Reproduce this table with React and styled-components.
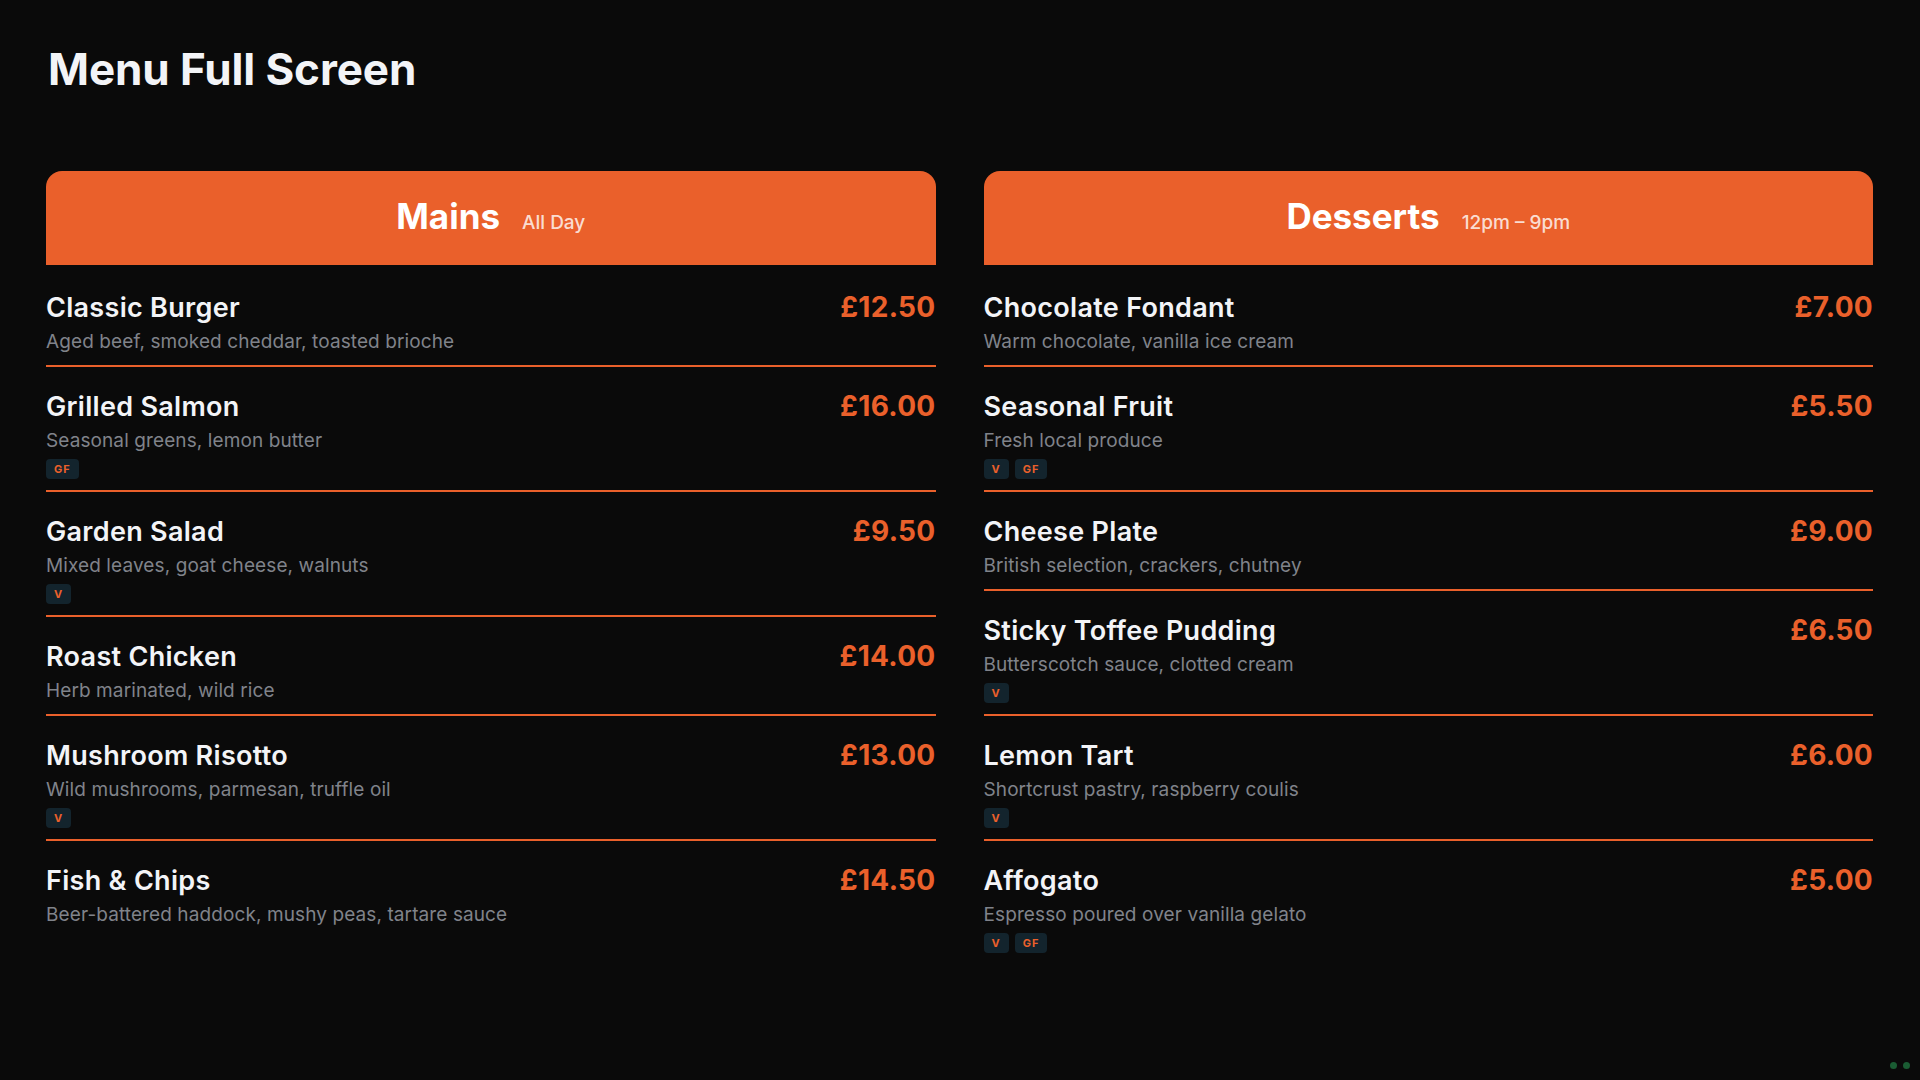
import React from "react";
import styled, { createGlobalStyle } from "styled-components";

const GlobalStyle = createGlobalStyle`
  html, body {
    margin: 0;
    padding: 0;
    background: #0a0a0a;
  }
  body {
    font-family: Inter, "Noto Sans", "Liberation Sans", sans-serif;
    color: #f3f4f6;
  }
  * { box-sizing: border-box; }
`;

const Page = styled.div`
  min-height: 1080px;
  padding: 43px 47px 40px 46px;
  background: #0a0a0a;
`;

const Title = styled.h1`
  margin: 0 0 75px 2px;
  font-size: 44px;
  line-height: 1.2;
  font-weight: 700;
  letter-spacing: -0.1px;
  color: #f3f4f7;
`;

const Columns = styled.div`
  display: grid;
  grid-template-columns: 1fr 1fr;
  gap: 48px;
`;

const Section = styled.section`
  display: flex;
  flex-direction: column;
`;

const SectionHeader = styled.header`
  height: 94px;
  background: #ea602b;
  border-radius: 16px 16px 0 0;
  display: flex;
  align-items: baseline;
  justify-content: center;
  gap: 22px;
  padding-top: 24px;
`;

const SectionName = styled.h2`
  margin: 0;
  font-size: 35px;
  line-height: 1.2;
  font-weight: 700;
  color: #ffffff;
`;

const SectionHours = styled.span`
  font-size: 19px;
  font-weight: 500;
  color: rgba(255, 255, 255, 0.8);
`;

const List = styled.div`
  display: flex;
  flex-direction: column;
  margin-top: 3px;
`;

const Item = styled.div`
  padding: 24px 0 11px;
  border-bottom: ${(p) => (p.$last ? "none" : "2px solid #ea602b")};
`;

const ItemTop = styled.div`
  display: flex;
  align-items: baseline;
  justify-content: space-between;
  gap: 24px;
`;

const ItemName = styled.div`
  font-size: 27px;
  line-height: 30px;
  font-weight: 600;
  letter-spacing: 0.3px;
  color: #f3f4f7;
`;

const Price = styled.div`
  font-size: 28px;
  line-height: 30px;
  font-weight: 700;
  letter-spacing: 0.3px;
  color: #ea602b;
`;

const Desc = styled.div`
  margin-top: 6px;
  font-size: 19px;
  line-height: 25px;
  letter-spacing: 0.1px;
  color: #80838a;
`;

const Tags = styled.div`
  display: flex;
  gap: 6px;
  margin-top: 6px;
`;

const Tag = styled.span`
  height: 20px;
  padding: 0 8px;
  display: inline-flex;
  align-items: center;
  border-radius: 4px;
  background: #13242d;
  color: #ea602b;
  font-size: 11px;
  font-weight: 700;
  letter-spacing: 1px;
`;

const Dots = styled.div`
  position: fixed;
  right: 10px;
  bottom: 11px;
  display: flex;
  gap: 6px;
`;

const Dot = styled.span`
  width: 7px;
  height: 7px;
  border-radius: 50%;
  background: #1a5c33;
`;

const sections = [
  {
    name: "Mains",
    hours: "All Day",
    items: [
      { name: "Classic Burger", desc: "Aged beef, smoked cheddar, toasted brioche", price: "£12.50", tags: [] },
      { name: "Grilled Salmon", desc: "Seasonal greens, lemon butter", price: "£16.00", tags: ["GF"] },
      { name: "Garden Salad", desc: "Mixed leaves, goat cheese, walnuts", price: "£9.50", tags: ["V"] },
      { name: "Roast Chicken", desc: "Herb marinated, wild rice", price: "£14.00", tags: [] },
      { name: "Mushroom Risotto", desc: "Wild mushrooms, parmesan, truffle oil", price: "£13.00", tags: ["V"] },
      { name: "Fish & Chips", desc: "Beer-battered haddock, mushy peas, tartare sauce", price: "£14.50", tags: [] },
    ],
  },
  {
    name: "Desserts",
    hours: "12pm – 9pm",
    items: [
      { name: "Chocolate Fondant", desc: "Warm chocolate, vanilla ice cream", price: "£7.00", tags: [] },
      { name: "Seasonal Fruit", desc: "Fresh local produce", price: "£5.50", tags: ["V", "GF"] },
      { name: "Cheese Plate", desc: "British selection, crackers, chutney", price: "£9.00", tags: [] },
      { name: "Sticky Toffee Pudding", desc: "Butterscotch sauce, clotted cream", price: "£6.50", tags: ["V"] },
      { name: "Lemon Tart", desc: "Shortcrust pastry, raspberry coulis", price: "£6.00", tags: ["V"] },
      { name: "Affogato", desc: "Espresso poured over vanilla gelato", price: "£5.00", tags: ["V", "GF"] },
    ],
  },
];

export default function App() {
  return (
    <>
      <GlobalStyle />
      <Page>
        <Title>Menu Full Screen</Title>
        <Columns>
          {sections.map((s) => (
            <Section key={s.name}>
              <SectionHeader>
                <SectionName>{s.name}</SectionName>
                <SectionHours>{s.hours}</SectionHours>
              </SectionHeader>
              <List>
                {s.items.map((it, i) => (
                  <Item key={it.name} $last={i === s.items.length - 1}>
                    <ItemTop>
                      <ItemName>{it.name}</ItemName>
                      <Price>{it.price}</Price>
                    </ItemTop>
                    <Desc>{it.desc}</Desc>
                    {it.tags.length > 0 && (
                      <Tags>
                        {it.tags.map((t) => (
                          <Tag key={t}>{t}</Tag>
                        ))}
                      </Tags>
                    )}
                  </Item>
                ))}
              </List>
            </Section>
          ))}
        </Columns>
      </Page>
      <Dots>
        <Dot />
        <Dot />
      </Dots>
    </>
  );
}
